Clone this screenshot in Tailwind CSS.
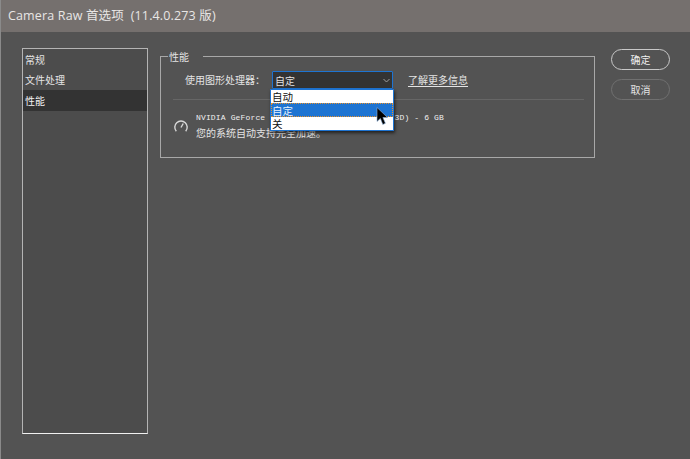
<!DOCTYPE html>
<html lang="zh-CN">
<head>
<meta charset="UTF-8" />
<title>Camera Raw 首选项</title>
<script src="https://cdn.jsdelivr.net/npm/@tailwindcss/browser@4"></script>
</head>
<body class="bg-[#535353] overflow-hidden">
<div class="w-[690px] h-[459px] flex flex-col border-l border-[#8a8a8a] font-['Noto_Sans_CJK_SC','Noto_Sans',sans-serif] text-[#e4e4e4] text-[10px]">
    <!-- title bar -->
    <div class="h-[32px] bg-[#75706e] flex items-center pl-[7px] text-[12.5px] tracking-[0.15px] text-[#e8e6e5] font-['Open_Sans','Noto_Sans_CJK_SC',sans-serif]">Camera Raw 首选项&nbsp;&nbsp;(11.4.0.273 版)</div>

    <div class="flex flex-1 pl-[21px] pt-[16px]">
        <!-- category list -->
        <div class="w-[126px] h-[386px] bg-[#4c4c4c] border border-[#b4b4b4] border-b-[#f0f0f0] shrink-0">
            <div class="h-[21px] pl-[2px] leading-[21px]">常规</div>
            <div class="h-[20px] pl-[2px] leading-[20px]">文件处理</div>
            <div class="h-[21px] pl-[2px] leading-[21px] bg-[#333333] text-[#f2f2f2]">性能</div>
        </div>

        <!-- performance group -->
        <div class="relative ml-[12px] mt-[8px] w-[435px] h-[102px] border border-[#a8a8a8] shrink-0">
            <div class="absolute left-[7px] top-[-10px] pl-[1px] bg-[#535353] w-[35px] h-[19px] leading-[19px]">性能</div>

            <div class="flex items-center pt-[14px] pl-[24px]">
                <span class="w-[87px] leading-[18px] whitespace-nowrap">使用图形处理器：</span>
                <div class="w-[121px] h-[18px] bg-[#333333] border border-[#1e74d2] flex items-center justify-between pl-[2px] pr-[2px] rounded-[1px] shrink-0">
                    <span class="leading-[15px]">自定</span>
                    <svg width="7" height="5" viewBox="0 0 7 5" class="fill-none stroke-[#a0a0a0]"><path d="M0.5 1l3 3 3-3" /></svg>
                </div>
                <span class="ml-[15px] underline underline-offset-2 leading-[18px] whitespace-nowrap">了解更多信息</span>
            </div>

            <div class="ml-[12px] mr-[10px] mt-[10px] border-t border-[#666666]"></div>

            <div class="flex items-center pl-[12px] pt-[10px]">
                <svg width="16" height="16" viewBox="0 0 16 16" class="fill-none stroke-[#d8d8d8] mt-[1px] shrink-0" stroke-width="1.4">
                    <path d="M3.3 13.2A6.2 6.2 0 1 1 12.7 13.2" />
                    <path d="M8 9.5L10.2 5.5" />
                </svg>
                <div class="ml-[7px]">
                    <div class="w-[248px] h-[15px] leading-[15px] text-[8px] tracking-[0.15px] text-[#f0f0f0] font-['Liberation_Mono',monospace] flex justify-between whitespace-nowrap">
                        <span>NVIDIA GeForce GTX 1060 6GB</span>
                        <span>(Direct3D) - 6 GB</span>
                    </div>
                    <div class="h-[16px] leading-[16px] whitespace-nowrap">您的系统自动支持完全加速。</div>
                </div>
            </div>

            <!-- open dropdown -->
            <div class="absolute left-[109px] top-[32px] w-[124px] h-[42px] bg-white border border-[#1e74d2] shadow-[1px_2px_3px_rgba(0,0,0,0.6)] text-[#111111] text-[10.5px]">
                <div class="h-[13px] leading-[13px] pl-[1px]">自动</div>
                <div class="h-[14px] leading-[13px] bg-[#1e74d2] text-[#e8f1fb] border border-dotted border-[#e8912c]">自定</div>
                <div class="h-[13px] leading-[13px] pl-[1px]">关</div>
            </div>

            <!-- mouse pointer -->
            <svg width="13" height="19" viewBox="0 0 13 19" class="absolute left-[215px] top-[50px]">
                <path d="M1 0.5V14.5L4.4 11.4L6.8 17.5L9.4 16.3L6.9 10.5H11.5Z" fill="#000000" stroke="#8fb4dd" stroke-width="0.6" />
            </svg>
        </div>

        <!-- buttons -->
        <div class="ml-[16px] mt-[1px] flex flex-col gap-[9px] shrink-0">
            <div class="w-[59px] h-[21px] rounded-full border border-[#c8c8c8] text-center leading-[19px] text-[#f0f0f0]">确定</div>
            <div class="w-[59px] h-[21px] rounded-full border border-[#707070] text-center leading-[19px]">取消</div>
        </div>
    </div>
</div>
</body>
</html>
